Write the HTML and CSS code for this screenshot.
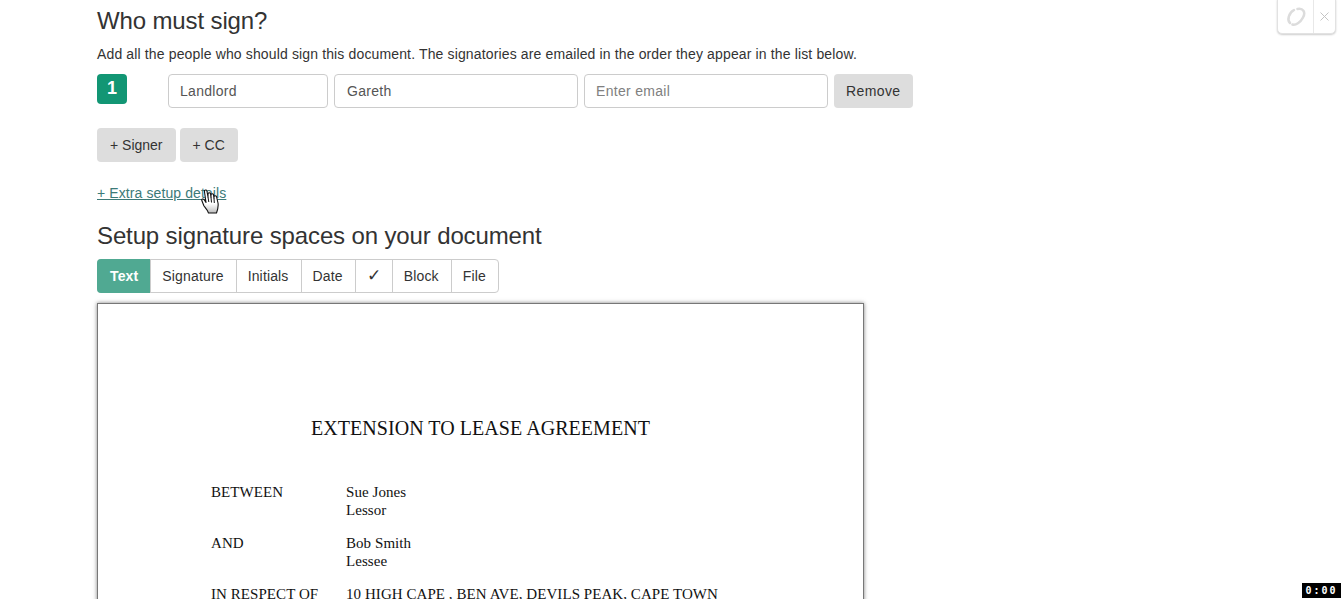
FILE: index.html
```html
<!DOCTYPE html>
<html lang="en">
<head>
  <meta charset="UTF-8" />
  <meta name="viewport" content="width=device-width, initial-scale=1.0"/>
  <title>Who must sign?</title>
  <link rel="stylesheet" href="styles.css">
</head>
<body>

<div class="container">
  <!-- Signers -->
  <h3 class="first-title">Who must sign?</h3>
  <p class="intro">Add all the people who should sign this document. The signatories are emailed in the order they appear in the list below.</p>

  <div class="signer-row">
    <span class="badge">1</span>
    <input class="role" type="text" value="Landlord" />
    <input class="name" type="text" value="Gareth" />
    <input class="email" type="text" placeholder="Enter email" />
    <button class="btn remove">Remove</button>
  </div>

  <div class="add-row">
    <button class="btn">+ Signer</button>
    <button class="btn">+ CC</button>
  </div>

  <div class="extra-row">
    <a class="extra-link" href="#">+ Extra setup details</a>
    <svg class="hand" viewBox="0 0 18 25" width="18" height="25">
      <defs>
        <linearGradient id="palm" x1="0" y1="0" x2="0" y2="1">
          <stop offset="0.6" stop-color="#fff"/>
          <stop offset="1" stop-color="#bbb"/>
        </linearGradient>
      </defs>
      <path d="M3.500 1.500C4.500 .5 6 1 6 2.500L7 8V4.500C7.500 3.500 9 3.500 9.500 4.500L10 8.500V5.500C10.500 4.500 12 4.500 12.500 5.500L13 9.500V7.500C13.500 6.500 15 6.500 15.500 7.500L17 14C17.500 17 17 20 15.500 24H7.500C6.500 21 5 19.500 3 17L.8 11.500C.5 10 2 9.500 3 10.500L5 13.500L3.500 3z" fill="url(#palm)" stroke="#111" stroke-width="1.100" stroke-linejoin="round"/>
      <path d="M7 8L7.800 13M10 8.500L10.500 13.500M13 9.500L13.300 14" fill="none" stroke="#111" stroke-width="1"/>
    </svg>
  </div>

  <!-- Signature spaces -->
  <h3 class="second-title">Setup signature spaces on your document</h3>
  <div class="btn-group">
    <span class="tab active">Text</span>
    <span class="tab">Signature</span>
    <span class="tab">Initials</span>
    <span class="tab">Date</span>
    <span class="tab check">✓</span>
    <span class="tab">Block</span>
    <span class="tab">File</span>
  </div>

  <div class="document">
    <h1 class="doc-title">EXTENSION TO LEASE AGREEMENT</h1>
    <div class="doc-grid">
      <div>BETWEEN</div>
      <div>Sue Jones<br>Lessor</div>
      <div>AND</div>
      <div>Bob Smith<br>Lessee</div>
      <div>IN RESPECT OF</div>
      <div>10 HIGH CAPE , BEN AVE, DEVILS PEAK, CAPE TOWN</div>
    </div>
  </div>
</div>

<!-- Floating widget top right -->
<div class="widget">
  <span class="widget-logo">
    <svg viewBox="0 0 20 20" width="20" height="20">
      <path d="M4 16C1 13 2.500 6 8 3" fill="none" stroke="#dcdcdc" stroke-width="2.500" stroke-linecap="round"/>
      <path d="M11.500 2C17 1 20 5 17 10.500C14.500 15.500 9.500 18.500 6.500 17.500" fill="none" stroke="#dcdcdc" stroke-width="2.500" stroke-linecap="round"/>
    </svg>
  </span>
  <span class="widget-close">
    <svg viewBox="0 0 9 9" width="9" height="9">
      <path d="M.5 .5L8.500 8.500M8.500 .5L.5 8.500" fill="none" stroke="#c4c4c4" stroke-width="1"/>
    </svg>
  </span>
</div>

<div class="timer">0:00</div>

</body>
</html>
```

FILE: styles.css
```css
html, body {
  height: 599px;
  overflow: hidden;
}
body {
  font-family: "Liberation Sans", Arial, sans-serif;
  font-size: 14px;
  color: #333;
  background: white;
  margin: 0;
  padding: 0;
}
.container {
  padding-left: 97px;
}
h3 {
  font-size: 24px;
  font-weight: normal;
  line-height: 26px;
  letter-spacing: -0.13px;
  margin: 0;
}
.first-title {
  padding-top: 8px;
}
.intro {
  margin: 10px 0 0 0;
  line-height: 20px;
  letter-spacing: 0.14px;
}
.signer-row {
  display: flex;
  gap: 6px;
  margin-top: 10px;
}
.badge {
  width: 30px;
  height: 30px;
  margin-right: 35px;
  background: #129674;
  color: white;
  font-size: 18px;
  font-weight: bold;
  line-height: 29px;
  text-align: center;
  border-radius: 4px;
}
input {
  height: 34px;
  box-sizing: border-box;
  padding: 6px 12px;
  border: 1px solid #ccc;
  border-radius: 4px;
  font-family: inherit;
  font-size: 14px;
  letter-spacing: 0.3px;
  color: #555;
  background: white;
}
input::placeholder {
  color: #808080;
  opacity: 1;
}
.role {
  width: 160px;
  padding-left: 11px;
}
.name, .email {
  width: 244px;
}
.email {
  padding-left: 11px;
}
.btn {
  height: 34px;
  padding: 0 13px;
  border: none;
  border-radius: 4px;
  background: #ddd;
  color: #333;
  font-family: inherit;
  font-size: 14px;
}
.btn.remove {
  padding: 0 12px;
  letter-spacing: 0.4px;
}
.add-row {
  display: flex;
  gap: 4px;
  margin-top: 20px;
}
.extra-row {
  position: relative;
  margin-top: 21px;
  line-height: 20px;
}
.extra-link {
  color: #3c7a78;
  letter-spacing: 0.1px;
}
.hand {
  position: absolute;
  left: 104px;
  top: 6px;
}
.second-title {
  margin-top: 20px;
}
.btn-group {
  display: inline-flex;
  margin-top: 10px;
  height: 34px;
  box-sizing: border-box;
  border: 1px solid #ccc;
  border-radius: 4px;
  vertical-align: top;
}
.tab {
  padding: 0 12px 0 11px;
  line-height: 32px;
  border-left: 1px solid #ccc;
  letter-spacing: 0.15px;
}
.tab:first-child {
  border-left: none;
}
.tab.active {
  background: #50a992;
  color: white;
  font-weight: bold;
  margin: -1px 0 -1px -1px;
  padding: 1px 12px 0 13px;
  height: 33px;
  border-radius: 4px 0 0 4px;
}
.tab.check {
  width: 36px;
  padding: 0;
  font-size: 17px;
  text-align: center;
}
.document {
  box-sizing: border-box;
  width: 767px;
  height: 400px;
  margin-top: 10px;
  border: 1px solid #777;
  box-shadow: 0 0 4px rgba(0,0,0,0.5);
  font-family: "Liberation Serif", "Times New Roman", serif;
  color: #111;
}
.doc-title {
  margin: 111px 0 0 0;
  font-size: 20px;
  font-weight: normal;
  letter-spacing: 0.05px;
  line-height: 26px;
  text-align: center;
}
.doc-grid {
  display: grid;
  grid-template-columns: 135px 1fr;
  row-gap: 16px;
  margin: 43px 0 0 113px;
  font-size: 15px;
  line-height: 17.500px;
  letter-spacing: 0.06px;
}
.widget {
  position: fixed;
  top: -1px;
  left: 1277px;
  width: 59px;
  height: 35px;
  box-sizing: border-box;
  display: flex;
  border: 1px solid #e2e2e2;
  border-radius: 0 0 5px 5px;
  box-shadow: 0 1px 2px rgba(0,0,0,0.2);
  background: white;
}
.widget-logo {
  width: 35px;
  display: flex;
  align-items: center;
  justify-content: center;
  border-right: 1px solid #e8e8e8;
}
.widget-close {
  flex: 1;
  display: flex;
  align-items: center;
  justify-content: center;
}
.timer {
  position: fixed;
  left: 1302px;
  top: 583px;
  width: 39px;
  height: 15px;
  background: black;
  color: white;
  font-family: "DejaVu Sans Mono", monospace;
  font-size: 10px;
  font-weight: bold;
  line-height: 15px;
  letter-spacing: 2px;
  text-align: center;
}
```
